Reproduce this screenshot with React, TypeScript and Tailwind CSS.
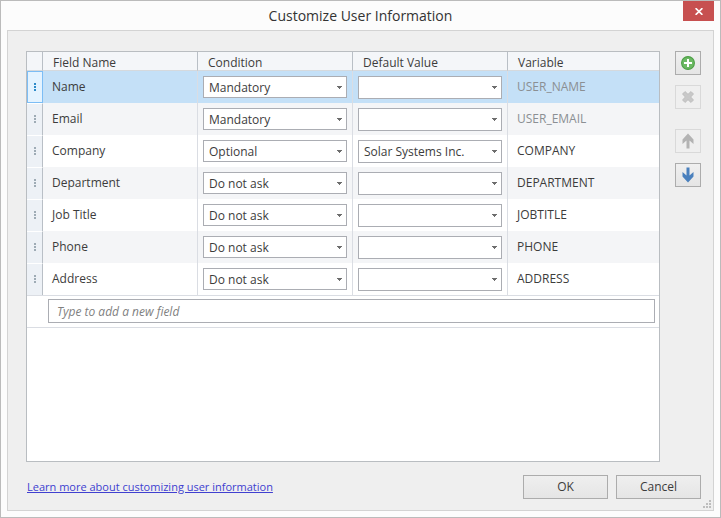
import React from "react";

type Field = {
  name: string;
  condition: string;
  value: string;
  variable: string;
  locked?: boolean;
};

const fields: Field[] = [
  { name: "Name", condition: "Mandatory", value: "", variable: "USER_NAME", locked: true },
  { name: "Email", condition: "Mandatory", value: "", variable: "USER_EMAIL", locked: true },
  { name: "Company", condition: "Optional", value: "Solar Systems Inc.", variable: "COMPANY" },
  { name: "Department", condition: "Do not ask", value: "", variable: "DEPARTMENT" },
  { name: "Job Title", condition: "Do not ask", value: "", variable: "JOBTITLE" },
  { name: "Phone", condition: "Do not ask", value: "", variable: "PHONE" },
  { name: "Address", condition: "Do not ask", value: "", variable: "ADDRESS" },
];

const conditions = ["Mandatory", "Optional", "Do not ask"];

function Dropdown({ label, value, options, tall }: { label: string; value: string; options: string[]; tall?: boolean }) {
  return (
    <div className="relative">
      <select
        aria-label={label}
        defaultValue={value}
        className={`block w-full appearance-none rounded-none border border-[#abadb3] bg-white pl-[5px] pr-4 text-[#3c3c3c] outline-none ${tall ? "h-[23px]" : "h-[22px] pt-[2px]"}`}
      >
        {options.map((option) => (
          <option key={option}>{option}</option>
        ))}
      </select>
      <svg
        className="pointer-events-none absolute right-[5px] top-[10px]"
        width="5"
        height="3"
        viewBox="0 0 5 3"
        fill="#6d6d6d"
        shapeRendering="crispEdges"
        aria-hidden="true"
      >
        <path d="M0 0h5v1H0zM1 1h3v1H1zM2 2h1v1H2z" />
      </svg>
    </div>
  );
}

function ToolButton({ label, disabled, children }: { label: string; disabled?: boolean; children: React.ReactNode }) {
  return (
    <button
      type="button"
      aria-label={label}
      disabled={disabled}
      className={`flex h-6 w-[26px] items-center justify-center border ${
        disabled ? "border-[#d9d9d9] bg-[#efefef]" : "border-[#acacac] bg-linear-to-b from-[#f0f0f0] to-[#e5e5e5]"
      }`}
    >
      {children}
    </button>
  );
}

function FieldRow({ field, index }: { field: Field; index: number }) {
  const selected = index === 0;
  const background = selected ? "bg-[#c4e0f7]" : index % 2 === 1 ? "bg-[#f4f5f7]" : "bg-white";
  const handle = selected
    ? "border border-[#7cbdf5] bg-[#e4f3ff] p-0 text-[#2e8bc9]"
    : "border-r border-t border-r-[#b9bfc6] border-t-white bg-[#edf1f6] p-0 pb-[2px] text-[#9eabb5]";
  return (
    <tr className={`h-8 ${background}`}>
      <td className={handle}>
        <svg
          className="mx-auto block"
          width="2"
          height="8"
          viewBox="0 0 2 8"
          fill="currentColor"
          shapeRendering="crispEdges"
          aria-hidden="true"
        >
          <path d="M0 0h2v2H0zM0 3h2v2H0zM0 6h2v2H0z" />
        </svg>
      </td>
      <td className="border-r border-[#dadde3] py-0 pl-[9px] pr-0">{field.name}</td>
      <td className="border-r border-[#dadde3] px-[5px] pb-0 pt-[5px] align-top">
        <Dropdown label={`${field.name} condition`} value={field.condition} options={conditions} />
      </td>
      <td className="border-r border-[#dadde3] px-[5px] pb-0 pt-[5px] align-top">
        <Dropdown
          label={`${field.name} default value`}
          value={field.value}
          options={field.value ? ["", field.value] : [""]}
          tall
        />
      </td>
      <td className={`py-0 pl-[9px] pr-0 ${field.locked ? "text-[#8b8f93]" : ""}`}>{field.variable}</td>
    </tr>
  );
}

export default function App() {
  return (
    <main className="flex min-h-screen flex-col border border-[#bbbbbb] bg-[#fcfcfc] px-[6px] pb-[6px] font-['Open_Sans','Noto_Sans',sans-serif] text-xs text-[#3c3c3c]">
      <header className="relative flex h-[29px] items-center justify-center">
        <h1 className="text-sm text-[#333333]">Customize User Information</h1>
        <button
          type="button"
          aria-label="Close"
          className="absolute right-0 top-0 flex h-5 w-[31px] items-center justify-center bg-[#c75050]"
        >
          <svg width="8" height="7" viewBox="0 0 8 7" fill="none" stroke="#ffffff" strokeWidth="1.7" aria-hidden="true">
            <path d="M0.6 0.2L7.4 6.8M7.4 0.2L0.6 6.8" />
          </svg>
        </button>
      </header>

      <section className="relative flex flex-1 flex-col border border-[#d3d3d3] bg-[#efefef] pb-[11px] pl-[18px] pr-3 pt-5">
        <div className="flex flex-1 gap-[15px]">
          <div className="flex-1 border border-[#b9bdc1] bg-white">
            <table className="w-full table-fixed border-separate border-spacing-0 text-left">
              <colgroup>
                <col className="w-4" />
                <col className="w-[155px]" />
                <col className="w-[155px]" />
                <col className="w-[155px]" />
                <col />
              </colgroup>
              <thead>
                <tr className="h-[19px] bg-[#f4f6f9] leading-[14px]">
                  <th aria-label="Row handle" className="border-b border-r border-b-[#d5d9dd] border-r-[#b9bfc6] p-0" />
                  <th className="border-b border-r border-b-[#d5d9dd] border-r-[#b9bfc6] pb-0 pl-[10px] pr-0 pt-1 font-normal">Field Name</th>
                  <th className="border-b border-r border-b-[#d5d9dd] border-r-[#b9bfc6] pb-0 pl-[10px] pr-0 pt-1 font-normal">Condition</th>
                  <th className="border-b border-r border-b-[#d5d9dd] border-r-[#b9bfc6] pb-0 pl-[10px] pr-0 pt-1 font-normal">Default Value</th>
                  <th className="border-b border-[#d5d9dd] pb-0 pl-[10px] pr-0 pt-1 font-normal">Variable</th>
                </tr>
              </thead>
              <tbody>
                {fields.map((field, index) => (
                  <FieldRow key={field.name} field={field} index={index} />
                ))}
                <tr>
                  <td colSpan={5} className="border-y border-[#dadde3] pb-1 pl-[21px] pr-1 pt-[3px]">
                    <input
                      type="text"
                      aria-label="New field"
                      placeholder="Type to add a new field"
                      className="block h-6 w-full border border-[#abadb3] bg-white px-2 italic outline-none placeholder:text-[#7f7f7f]"
                    />
                  </td>
                </tr>
              </tbody>
            </table>
          </div>

          <div className="flex flex-col gap-[10px]">
            <ToolButton label="Add field">
              <svg width="14" height="14" viewBox="0 0 14 14" aria-hidden="true">
                <circle cx="7" cy="7" r="6.4" fill="#6cb963" stroke="#4c9f45" strokeWidth="1.1" />
                <path d="M6 3h2v3h3v2H8v3H6V8H3V6h3z" fill="#ffffff" />
              </svg>
            </ToolButton>
            <ToolButton label="Delete field" disabled>
              <svg width="12" height="12" viewBox="0 0 12 12" aria-hidden="true">
                <path
                  d="M3 0.500L6 3.300L9 0.500L11.500 3L8.700 6L11.500 9L9 11.500L6 8.700L3 11.500L0.500 9L3.300 6L0.500 3z"
                  fill="#c8c8c8"
                  stroke="#bababa"
                  strokeWidth="0.8"
                />
              </svg>
            </ToolButton>
            <div className="mt-[10px]">
              <ToolButton label="Move up" disabled>
                <svg width="12" height="16" viewBox="0 0 12 16" fill="#b3b3b3" aria-hidden="true">
                  <path d="M6 0.500L11.500 6.500V11L7.500 7.500V15.500H4.500V7.500L0.500 11V6.500z" />
                </svg>
              </ToolButton>
            </div>
            <ToolButton label="Move down">
              <svg width="12" height="16" viewBox="0 0 12 16" fill="#4a80bd" aria-hidden="true">
                <path d="M6 15.500L11.500 9.500V5L7.500 8.500V0.500H4.500V8.500L0.500 5V9.500z" />
              </svg>
            </ToolButton>
          </div>
        </div>

        <footer className="mt-[13px] flex items-center gap-2 pl-px">
          <a href="#learn-more" className="mr-auto text-[11px] text-[#4040d0] underline">
            Learn more about customizing user information
          </a>
          <button type="button" className="h-6 w-[85px] border border-[#acacac] bg-linear-to-b from-[#efefef] to-[#e5e5e5]">
            OK
          </button>
          <button type="button" className="h-6 w-[85px] border border-[#acacac] bg-linear-to-b from-[#efefef] to-[#e5e5e5]">
            Cancel
          </button>
        </footer>

        <svg
          className="absolute bottom-[2px] right-[2px]"
          width="8"
          height="8"
          viewBox="0 0 8 8"
          fill="#bdbdbd"
          shapeRendering="crispEdges"
          aria-hidden="true"
        >
          <path d="M6 0h2v2H6zM3 3h2v2H3zM6 3h2v2H6zM0 6h2v2H0zM3 6h2v2H3zM6 6h2v2H6z" />
        </svg>
      </section>
    </main>
  );
}
